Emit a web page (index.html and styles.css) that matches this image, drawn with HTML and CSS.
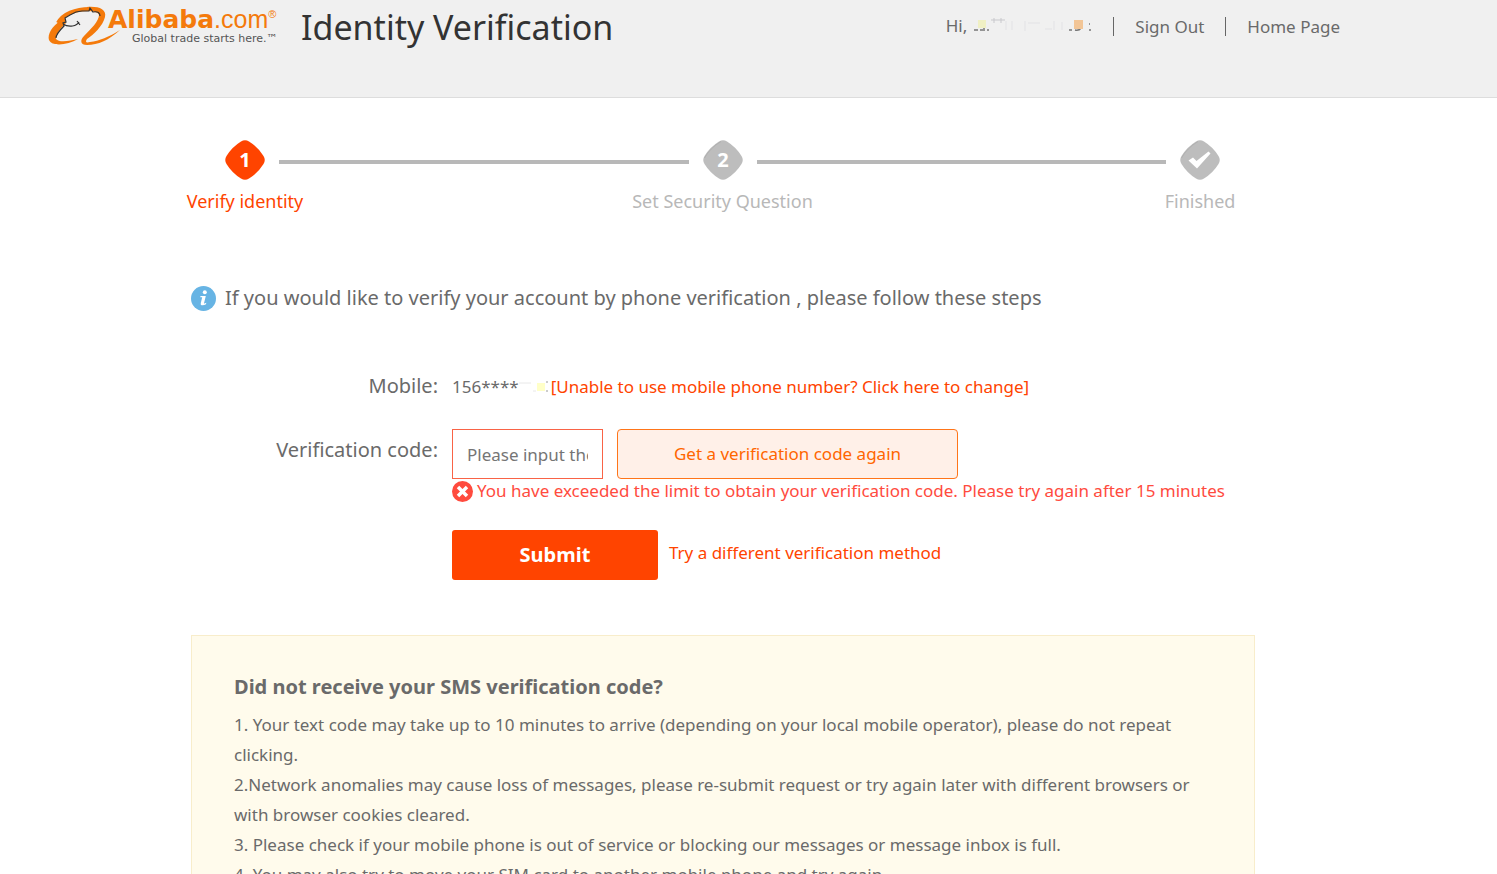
FILE: index.html
```html
<!DOCTYPE html>
<html lang="en">
<head>
<meta charset="utf-8">
<title>Identity Verification</title>
<link rel="stylesheet" href="styles.css">
</head>
<body>
<header class="header">
  <a class="logo" href="#" aria-label="Alibaba.com home">
    <svg class="logo-mark" viewBox="0 0 76 40" aria-hidden="true">
      <path d="M10 17C15 8 27 3 42 3" fill="none" stroke="#f47a0b" stroke-width="4"/>
      <path d="M39 1C50 0 59 3 57 11C55 20 45 29 39 33C37 36 38 37 42 36C51 35 61 31 72 24C61 34 50 39 39 39C32 39 32 34 36 30C43 23 51 15 51 9C50 6 45 5 39 5Z" fill="#f47a0b"/>
      <path d="M17 12C5 18-1 28 1 34C4 41 20 39 30 33C22 35 11 37 8 33C7 29 12 23 18 17Z" fill="#f47a0b"/>
      <path d="M8 32C8 28 12 24 16 20L15 17L18 16L17 12L22 9L28 6L34 5L41 5L42 2L45 6C50 5 52 7 52 10M15 18C21 22 29 20 31 16M29 15L32 19" fill="none" stroke="#333" stroke-width="1.2"/>
    </svg>
    <span class="logo-words">
      <span class="logo-name"><b>Alibaba</b>.com<sup>®</sup></span>
      <span class="logo-tag">Global trade starts here.™</span>
    </span>
  </a>
  <h1 class="title">Identity Verification</h1>
  <nav class="nav">
    <span class="user">Hi,
      <svg class="masked" viewBox="0 0 120 20" aria-label="masked account name">
        <path d="M2 14h4M8 14h3M12 12v3M15 14h2M97 14h3M103 14q4 1 6-2M117 14h2M117 8h1" fill="none" stroke="#777" stroke-width="1.5"/>
        <path d="M19 4h14M22 2v5M29 2v5" fill="none" stroke="#c8c8cc"/>
        <path d="M34 5v9M40 5v9M53 5v10M56 7h12M73 13h7M82 5v9M90 6v8" fill="none" stroke="#e2e2e5"/>
        <path d="M6 4h8v8h-8z" fill="#f0f0c4"/>
        <path d="M102 4h9v9h-9z" fill="#f2c596"/>
      </svg>
    </span>
    <a href="#">Sign Out</a>
    <a href="#">Home Page</a>
  </nav>
</header>

<main class="main">
  <ol class="steps">
    <li class="step current">
      <svg class="badge" viewBox="0 0 40 40" aria-hidden="true"><path d="M16 1.500Q20-1 24 1.500Q33 7 38.500 16Q41 20 38.500 24Q33 33 24 38.500Q20 41 16 38.500Q7 33 1.500 24Q-1 20 1.500 16Q7 7 16 1.500Z"/><text x="20" y="27">1</text></svg>
      <span class="step-label">Verify identity</span>
    </li>
    <li class="line" aria-hidden="true"></li>
    <li class="step">
      <svg class="badge" viewBox="0 0 40 40" aria-hidden="true"><path d="M16 1.500Q20-1 24 1.500Q33 7 38.500 16Q41 20 38.500 24Q33 33 24 38.500Q20 41 16 38.500Q7 33 1.500 24Q-1 20 1.500 16Q7 7 16 1.500Z"/><path class="shade" d="M1.500 18Q7 8 18 1.500"/><text x="20" y="27">2</text></svg>
      <span class="step-label">Set Security Question</span>
    </li>
    <li class="line" aria-hidden="true"></li>
    <li class="step">
      <svg class="badge" viewBox="0 0 40 40" aria-hidden="true"><path d="M16 1.500Q20-1 24 1.500Q33 7 38.500 16Q41 20 38.500 24Q33 33 24 38.500Q20 41 16 38.500Q7 33 1.500 24Q-1 20 1.500 16Q7 7 16 1.500Z"/><path class="shade" d="M1.500 18Q7 8 18 1.500"/><path class="tick" d="M8.500 20.500L13 17.500L16.500 21L28.500 11.500L30.500 13.500L17 28.500Z"/></svg>
      <span class="step-label">Finished</span>
    </li>
  </ol>

  <p class="intro">
    <svg class="info" viewBox="0 0 25 25" aria-hidden="true"><circle cx="12.500" cy="12.500" r="12.500" fill="#67b4e4"/><circle cx="13.800" cy="6.200" r="2" fill="#fff"/><path d="M9.500 10h5.300L13 17.200Q13 18 15.300 16.800L15 18.200Q12.500 19.700 10.500 19.200Q9.300 18.700 9.800 17L11.200 11.300H9.300Z" fill="#fff"/></svg>
    If you would like to verify your account by phone verification , please follow these steps
  </p>

  <form class="form">
    <div class="row mobile-row">
      <span class="label">Mobile:</span>
      <div class="field mobile">
        <span>156****</span>
        <svg class="masked-number" viewBox="0 0 32 16" aria-label="masked digits"><path d="M0 4h12M14 12h3" stroke="#e8e8e8"/><path d="M18 4h8v8h-8z" fill="#ffffc8"/><path d="M27 3h2M27 12h2" stroke="#999"/></svg>
        <a class="link" href="#">[Unable to use mobile phone number? Click here to change]</a>
      </div>
    </div>
    <div class="row code-row">
      <label class="label" for="code">Verification code:</label>
      <div class="field">
        <div class="controls">
          <input class="input" id="code" type="text" placeholder="Please input the code">
          <button class="again" type="button">Get a verification code again</button>
        </div>
        <p class="error">
          <svg class="cross" viewBox="0 0 21 21" aria-hidden="true"><circle cx="10.500" cy="10.500" r="10.500" fill="#ff4b3e"/><path d="M6 6l9 9M15 6l-9 9" stroke="#fff" stroke-width="3.500"/></svg>
          You have exceeded the limit to obtain your verification code. Please try again after 15 minutes
        </p>
      </div>
    </div>
    <div class="row submit-row">
      <span class="label"></span>
      <div class="field actions">
        <button class="submit" type="submit">Submit</button>
        <a class="link" href="#">Try a different verification method</a>
      </div>
    </div>
  </form>

  <section class="notice">
    <h2>Did not receive your SMS verification code?</h2>
    <p>1. Your text code may take up to 10 minutes to arrive (depending on your local mobile operator), please do not repeat clicking.</p>
    <p>2.Network anomalies may cause loss of messages, please re-submit request or try again later with different browsers or with browser cookies cleared.</p>
    <p>3. Please check if your mobile phone is out of service or blocking our messages or message inbox is full.</p>
    <p>4. You may also try to move your SIM card to another mobile phone and try again.</p>
  </section>
</main>
</body>
</html>
```
FILE: styles.css
```css
* { box-sizing: border-box; }

body {
  margin: 0;
  height: 100vh;
  overflow: hidden;
  background: #fff;
  color: #6a6a6a;
  font: 17px/30px "Noto Sans", "Open Sans", sans-serif;
}

h1, h2, p, ol { margin: 0; padding: 0; }
a { color: inherit; text-decoration: none; }
button, input { font: inherit; }

.header {
  display: flex;
  align-items: flex-start;
  height: 98px;
  padding: 0 157px 0 48px;
  background: #f0f0f0;
  border-bottom: 1px solid #ddd;
}

.logo { display: flex; flex: none; width: 253px; padding-top: 6px; }
.logo-mark { flex: none; width: 76px; height: 40px; margin-right: -16px; }
.logo-words { display: flex; flex-direction: column; white-space: nowrap; }
.logo-name {
  color: #f47a0b;
  font: 25px/27px "Liberation Sans", Arial, sans-serif;
}
.logo-name b { font: bold 25px/27px "DejaVu Sans", sans-serif; }
.logo-name sup { font-size: 11px; line-height: 0; vertical-align: 10px; }
.logo-tag {
  padding-left: 24px;
  color: #555;
  font: 11px/11px "DejaVu Sans", sans-serif;
}

.title {
  color: #333;
  font-size: 34px;
  font-weight: 400;
  line-height: 54px;
}

.nav { display: flex; align-items: center; margin-left: auto; padding-top: 11px; }
.nav a {
  margin-left: 21px;
  padding-left: 21px;
  border-left: 1px solid #666;
  line-height: 19px;
}
.user { display: flex; align-items: center; gap: 5px; }
.masked { width: 120px; height: 20px; }

.main { padding: 42px 242px 0 191px; }

.steps {
  display: flex;
  align-items: flex-start;
  padding: 0 21px 0 20px;
  font-size: 18px;
  list-style: none;
}
.step {
  display: flex;
  flex: none;
  flex-direction: column;
  align-items: center;
  width: 68px;
  color: #b8b8b8;
}
.badge { width: 40px; height: 40px; fill: #bdbdbd; }
.badge text {
  fill: #fff;
  font: bold 20px "Noto Sans", sans-serif;
  text-anchor: middle;
}
.badge .shade { fill: none; stroke: #b0b0b0; stroke-width: 1; }
.badge .tick { fill: #fff; }
.step-label { margin-top: 6px; white-space: nowrap; }
.current { color: #ff4400; }
.current .badge { fill: #ff4400; }
.line { flex: 1; height: 4px; margin-top: 20px; background: #b8b8b8; }

.intro {
  display: flex;
  align-items: center;
  gap: 9px;
  margin-top: 67px;
  font-size: 20px;
  white-space: nowrap;
}
.info { flex: none; width: 25px; height: 25px; }

.form { margin-top: 58px; }
.row { display: flex; align-items: flex-start; gap: 14px; }
.label { flex: none; width: 247px; font-size: 20px; text-align: right; }
.field { flex: 1; white-space: nowrap; }
.mobile-row { align-items: baseline; }
.mobile { display: flex; align-items: center; }
.masked-number { width: 32px; height: 16px; }
.link { color: #ff4400; }

.code-row { margin-top: 27px; }
.code-row .label { padding-top: 6px; }
.controls { display: flex; gap: 14px; }
.input {
  width: 151px;
  height: 50px;
  padding: 0 14px;
  border: 1px solid #f96346;
  color: #666;
}
.input::placeholder { color: #757575; opacity: 1; }
.again {
  width: 341px;
  height: 50px;
  border: 1px solid #ff7519;
  border-radius: 4px;
  background: #fff0e8;
  color: #ff6600;
}
.error { display: flex; align-items: center; gap: 4px; color: #ff4b3e; line-height: 24px; }
.cross { flex: none; width: 21px; height: 21px; }

.submit-row { margin-top: 27px; }
.actions { display: flex; align-items: center; gap: 11px; }
.actions .link { padding-bottom: 4px; }
.submit {
  width: 206px;
  height: 50px;
  border: 0;
  border-radius: 3px;
  background: #ff4400;
  color: #fff;
  font-size: 20px;
  font-weight: 700;
}

.notice {
  margin-top: 55px;
  padding: 36px 42px;
  border: 1px solid #f8edcb;
  background: #fffbec;
}
.notice h2 { margin-bottom: 8px; font-size: 20px; line-height: 30px; }
```
